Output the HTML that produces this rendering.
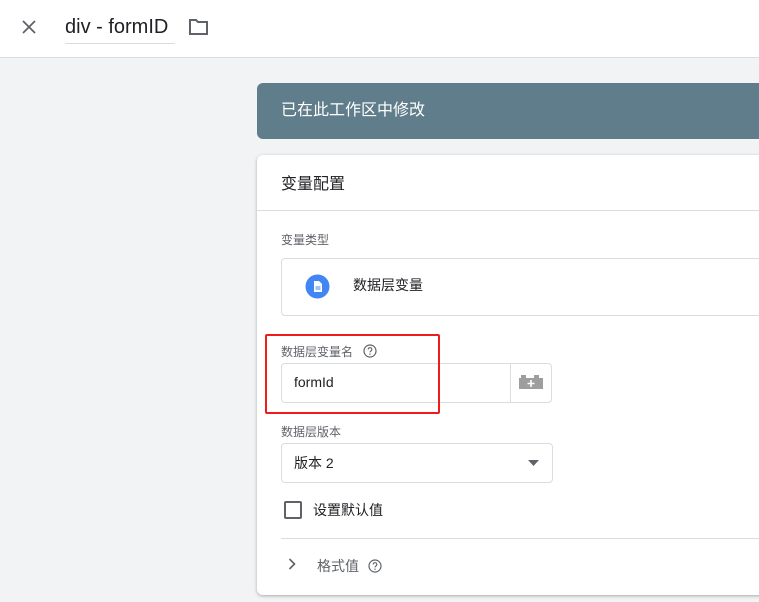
<!DOCTYPE html>
<html><head><meta charset="utf-8"><style>
*{box-sizing:border-box;margin:0;padding:0}
body{width:759px;height:602px;overflow:hidden;background:#f1f3f4;font-family:"Liberation Sans","Noto Sans CJK SC",sans-serif;position:relative;color:#202124}
.abs{position:absolute}
</style></head><body>
<div class="abs" style="left:0;top:0;width:759px;height:58px;background:#fff;border-bottom:1px solid #dadce0"></div>
<svg class="abs" style="left:20px;top:18px" width="18" height="18" viewBox="0 0 18 18"><path d="M3 3L15 15M15 3L3 15" stroke="#5f6368" stroke-width="1.8"/></svg>
<div class="abs" style="left:65px;top:14px;font-size:20px;color:#202124;line-height:26px">div - formID</div>
<div class="abs" style="left:65px;top:43px;width:110px;height:1px;background:#dadce0"></div>
<svg class="abs" style="left:188px;top:17px" width="22" height="20" viewBox="0 0 22 20"><path d="M2 3h6l2 2h9v12H2z" fill="none" stroke="#5f6368" stroke-width="2"/></svg>

<div class="abs" style="left:257px;top:83px;width:520px;height:56px;background:#607d8b;border-radius:6px;color:#fff;font-size:16px;padding:13px 0 0 24px">已在此工作区中修改</div>

<div class="abs" style="left:257px;top:155px;width:520px;height:440px;background:#fff;border-radius:6px;box-shadow:0 1px 3px rgba(0,0,0,.3)">
 <div class="abs" style="left:24px;top:15px;font-size:16px">变量配置</div>
 <div class="abs" style="left:0;top:55px;width:520px;height:1px;background:#dadce0"></div>
 <div class="abs" style="left:24px;top:76px;font-size:12px;color:#5f6368">变量类型</div>
 <div class="abs" style="left:24px;top:103px;width:500px;height:58px;border:1px solid #dadce0;border-radius:4px"></div>
 <svg class="abs" style="left:48px;top:119px" width="25" height="25" viewBox="0 0 25 25"><circle cx="12.5" cy="12.5" r="12" fill="#4285f4"/><path d="M9 7h5l3 3v8H9z" fill="#fff"/><path d="M10.5 13h5M10.5 15h5" stroke="#4285f4" stroke-width=".9"/></svg>
 <div class="abs" style="left:96px;top:120px;font-size:14px">数据层变量</div>

 <div class="abs" style="left:24px;top:188px;font-size:12px;color:#5f6368">数据层变量名</div>
 <svg class="abs" style="left:106px;top:189px" width="14" height="14" viewBox="0 0 14 14"><circle cx="7" cy="7" r="6" fill="none" stroke="#5f6368" stroke-width="1.2"/><path d="M5.2 5.5a1.8 1.8 0 1 1 2.5 1.6c-.5.3-.7.6-.7 1.3" fill="none" stroke="#5f6368" stroke-width="1.1"/><circle cx="7" cy="10.2" r=".7" fill="#5f6368"/></svg>
 <div class="abs" style="left:24px;top:208px;width:271px;height:40px;border:1px solid #dadce0;border-radius:4px"></div>
 <div class="abs" style="left:253px;top:209px;width:1px;height:38px;background:#dadce0"></div>
 <div class="abs" style="left:37px;top:219px;font-size:14px">formId</div>
 <svg class="abs" style="left:262px;top:220px" width="24" height="14" viewBox="0 0 24 14"><rect x="2" y="0" width="5" height="3" fill="#9e9e9e"/><rect x="15" y="0" width="5" height="3" fill="#9e9e9e"/><rect x="0" y="3" width="24" height="11" fill="#9e9e9e"/><path d="M12 5v7M8.5 8.5h7" stroke="#fff" stroke-width="1.6"/></svg>

 <div class="abs" style="left:24px;top:268px;font-size:12px;color:#5f6368">数据层版本</div>
 <div class="abs" style="left:24px;top:288px;width:272px;height:40px;border:1px solid #dadce0;border-radius:4px"></div>
 <div class="abs" style="left:37px;top:298px;font-size:14px">版本 2</div>
 <svg class="abs" style="left:271px;top:305px" width="11" height="6"><path d="M0 0h11L5.5 6z" fill="#5f6368"/></svg>

 <div class="abs" style="left:27px;top:346px;width:18px;height:18px;border:2px solid #5f6368;border-radius:2px"></div>
 <div class="abs" style="left:56px;top:345px;font-size:14px">设置默认值</div>
 <div class="abs" style="left:24px;top:383px;width:500px;height:1px;background:#dadce0"></div>
 <svg class="abs" style="left:31px;top:403px" width="8" height="12"><path d="M1.5 1l5 5-5 5" fill="none" stroke="#5f6368" stroke-width="1.6"/></svg>
 <div class="abs" style="left:60px;top:401px;font-size:14px;color:#5f6368">格式值</div>
 <svg class="abs" style="left:111px;top:404px" width="14" height="14" viewBox="0 0 14 14"><circle cx="7" cy="7" r="6" fill="none" stroke="#5f6368" stroke-width="1.2"/><path d="M5.2 5.5a1.8 1.8 0 1 1 2.5 1.6c-.5.3-.7.6-.7 1.3" fill="none" stroke="#5f6368" stroke-width="1.1"/><circle cx="7" cy="10.2" r=".7" fill="#5f6368"/></svg>
</div>

<div class="abs" style="left:265px;top:334px;width:175px;height:80px;border:2px solid #ee1c1c;border-radius:2px"></div>
</body></html>
